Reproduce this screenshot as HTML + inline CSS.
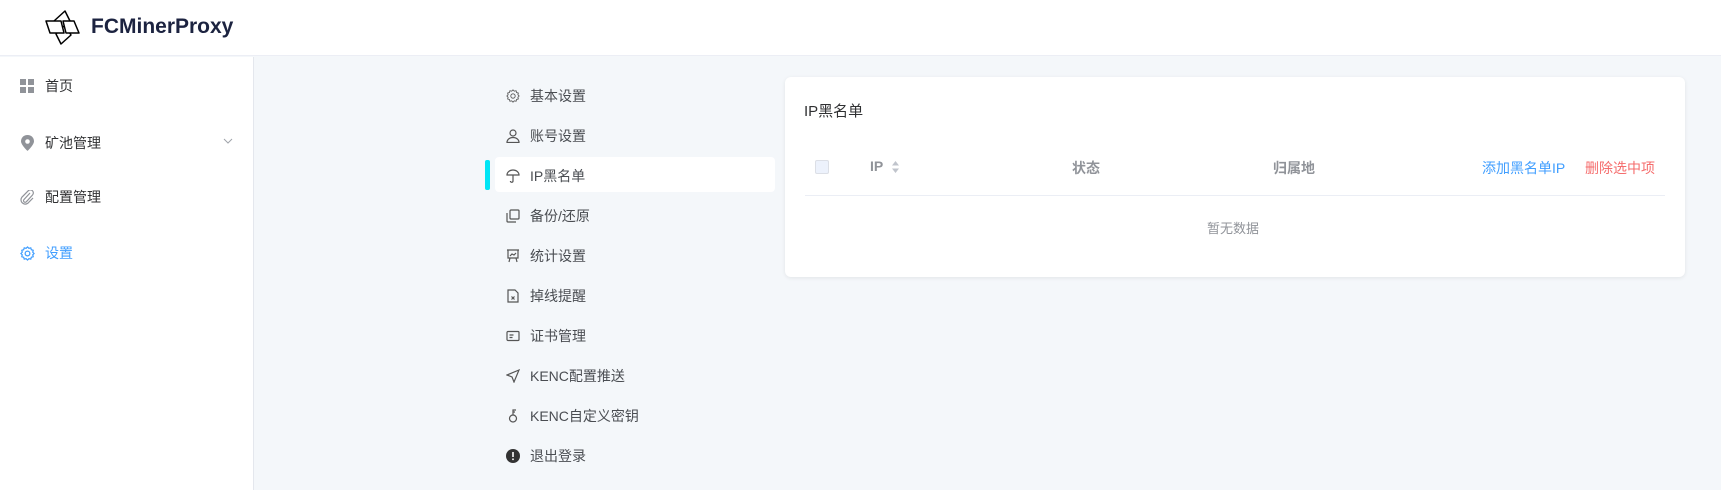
<!DOCTYPE html>
<html><head><meta charset="utf-8"><style>
*{margin:0;padding:0;box-sizing:border-box}
body{width:1721px;height:490px;overflow:hidden;background:#f4f7fa;font-family:"Liberation Sans","Noto Sans CJK SC",sans-serif;position:relative;color:#303133}
.hdr{position:absolute;left:0;top:0;width:1721px;height:56px;background:#fff;border-bottom:1px solid #eceef5}
.logo{position:absolute;left:44px;top:8px}
.brand{position:absolute;left:91px;top:15px;font-size:21px;font-weight:bold;color:#1c2340}
.side{position:absolute;left:0;top:57px;width:254px;height:433px;background:#fff;border-right:1px solid #e4e7ed}
.mi{position:absolute;left:20px;font-size:14px;color:#303133;display:flex;align-items:center}
.mi svg{margin-right:10px}
.sub{position:absolute;font-size:14px;color:#4a4d52;display:flex;align-items:center;left:506px}
.sub svg{margin-right:10px}
.card{position:absolute;left:785px;top:77px;width:900px;height:200px;background:#fff;border-radius:6px;box-shadow:0 1px 4px rgba(0,0,0,.08)}
.t{position:absolute;font-size:14px}
</style></head><body>
<div class="hdr">
<svg class="logo" width="38" height="38" viewBox="0 0 38 38" fill="#fff" stroke="#000" stroke-width="1.5" stroke-linejoin="round">
<polygon points="10,13 21,3 26,13 17,22"/>
<polygon points="12,26 21,17 27,27 17,36"/>
<polygon points="2,13 17,13 20,25 6,25"/>
<polygon points="19,13 30,13 35,25 22,25"/>
</svg>
<div class="brand">FCMinerProxy</div>
</div>
<div class="side">
<div class="mi" style="top:19px"><svg width="15" height="15" viewBox="0 0 15 15" fill="#909399"><rect x="0" y="0" width="6" height="6"/><rect x="8" y="0" width="6" height="6"/><rect x="0" y="8" width="6" height="6"/><rect x="8" y="8" width="6" height="6"/></svg>首页</div>
<div class="mi" style="top:76px"><svg width="15" height="16" viewBox="0 0 15 16"><path d="M7.5 0C3.5 0 1 3 1 6.3 1 10 7.5 16 7.5 16S14 10 14 6.3C14 3 11.5 0 7.5 0z" fill="#909399"/><circle cx="7.5" cy="6.5" r="2.3" fill="#fff"/></svg>矿池管理</div>
<svg style="position:absolute;left:223px;top:81px" width="10" height="6" viewBox="0 0 10 6"><path d="M1 1l4 4 4-4" stroke="#a0a4ab" fill="none"/></svg>
<div class="mi" style="top:130px"><svg width="15" height="15" viewBox="0 0 15 15"><path d="M10 3L4 9.5a1.6 1.6 0 0 0 2.3 2.3L12.5 5a3 3 0 0 0-4.3-4.2L1.8 7.3a4.3 4.3 0 0 0 6 6L13 8" stroke="#909399" stroke-width="1.2" fill="none"/></svg>配置管理</div>
<div class="mi" style="top:186px;color:#409eff"><svg width="15" height="15" viewBox="0 0 16 16"><circle cx="8" cy="8" r="2.5" stroke="#409eff" fill="none" stroke-width="1.3"/><path d="M8 1l1.5 1.5 2-.5.6 2 2 .6-.5 2L15 8l-1.4 1.4.5 2-2 .6-.6 2-2-.5L8 15l-1.5-1.5-2 .5-.6-2-2-.6.5-2L1 8l1.4-1.4-.5-2 2-.6.6-2 2 .5z" stroke="#409eff" fill="none" stroke-width="1.3"/></svg>设置</div>
</div>

<div style="position:absolute;left:485px;top:160px;width:5px;height:30px;background:#00e5f5;border-radius:2px"></div>
<div style="position:absolute;left:495px;top:157px;width:280px;height:35px;background:#fff;border-radius:4px"></div>

<div class="sub" style="top:86px"><svg width="14" height="14" viewBox="0 0 16 16"><circle cx="8" cy="8" r="2.5" stroke="#555" fill="none"/><path d="M8 1l1.5 1.5 2-.5.6 2 2 .6-.5 2L15 8l-1.4 1.4.5 2-2 .6-.6 2-2-.5L8 15l-1.5-1.5-2 .5-.6-2-2-.6.5-2L1 8l1.4-1.4-.5-2 2-.6.6-2 2 .5z" stroke="#555" fill="none"/></svg>基本设置</div>
<div class="sub" style="top:126px"><svg width="14" height="14" viewBox="0 0 14 14" fill="none" stroke="#555" stroke-width="1.2"><circle cx="7" cy="4" r="3"/><path d="M1 13.5c0-3 2.7-5 6-5s6 2 6 5z"/></svg>账号设置</div>
<div class="sub" style="top:166px"><svg width="14" height="14" viewBox="0 0 14 14" fill="none" stroke="#555" stroke-width="1.2"><path d="M1 6a6 5 0 0 1 12 0z"/><path d="M7 6v6a1.3 1.3 0 0 1-2.6 0"/></svg>IP黑名单</div>
<div class="sub" style="top:206px"><svg width="14" height="14" viewBox="0 0 14 14" fill="none" stroke="#555" stroke-width="1.2"><rect x="4" y="1" width="9" height="9" rx="1"/><path d="M1 4v8a1 1 0 0 0 1 1h8"/></svg>备份/还原</div>
<div class="sub" style="top:246px"><svg width="14" height="14" viewBox="0 0 14 14" fill="none" stroke="#555" stroke-width="1.2"><path d="M1 1h12M2 1v8h10V1M4 9l-1 4M10 9l1 4M4 7l2-2 2 1 2-2"/></svg>统计设置</div>
<div class="sub" style="top:286px"><svg width="14" height="14" viewBox="0 0 14 14" fill="none" stroke="#555" stroke-width="1.2"><path d="M2 1h7l3 3v9H2z"/><path d="M5.5 7.5l3 3M8.5 7.5l-3 3"/></svg>掉线提醒</div>
<div class="sub" style="top:326px"><svg width="14" height="14" viewBox="0 0 14 14" fill="none" stroke="#555" stroke-width="1.2"><rect x="1" y="2.5" width="12" height="9" rx="1"/><path d="M3.5 6h4M3.5 8.5h3"/></svg>证书管理</div>
<div class="sub" style="top:366px"><svg width="14" height="14" viewBox="0 0 14 14" fill="none" stroke="#555" stroke-width="1.2"><path d="M13 1L1 6l5 2 2 5z"/></svg>KENC配置推送</div>
<div class="sub" style="top:406px"><svg width="14" height="14" viewBox="0 0 14 14" fill="none" stroke="#555" stroke-width="1.2"><circle cx="7" cy="9.5" r="3.5"/><path d="M7 6V1h3M7 3h2"/></svg>KENC自定义密钥</div>
<div class="sub" style="top:446px"><svg width="14" height="14" viewBox="0 0 14 14"><circle cx="7" cy="7" r="7" fill="#333"/><rect x="6.2" y="3" width="1.6" height="5" fill="#fff"/><rect x="6.2" y="9.5" width="1.6" height="1.6" fill="#fff"/></svg>退出登录</div>

<div class="card">
<div class="t" style="left:19px;top:23px;font-size:15px;color:#303133">IP黑名单</div>
<div style="position:absolute;left:30px;top:83px;width:14px;height:14px;border:1px solid #dcdfe6;border-radius:2px;background:#edf2fc"></div>
<div class="t" style="left:85px;top:81px;color:#909399;font-weight:bold">IP</div>
<svg style="position:absolute;left:106px;top:83px" width="9" height="14" viewBox="0 0 9 14" fill="#c0c4cc"><path d="M4.5 1L8 5.5H1zM4.5 13L1 8.5h7z"/></svg>
<div class="t" style="left:287px;top:81px;color:#909399;font-weight:bold">状态</div>
<div class="t" style="left:488px;top:81px;color:#909399;font-weight:bold">归属地</div>
<div class="t" style="left:697px;top:81px;color:#409eff">添加黑名单IP</div>
<div class="t" style="left:800px;top:81px;color:#f56c6c">删除选中项</div>
<div style="position:absolute;left:20px;top:118px;width:860px;height:1px;background:#ebeef5"></div>
<div class="t" style="left:422px;top:141px;color:#909399;font-size:13px">暂无数据</div>
</div>
</body></html>
